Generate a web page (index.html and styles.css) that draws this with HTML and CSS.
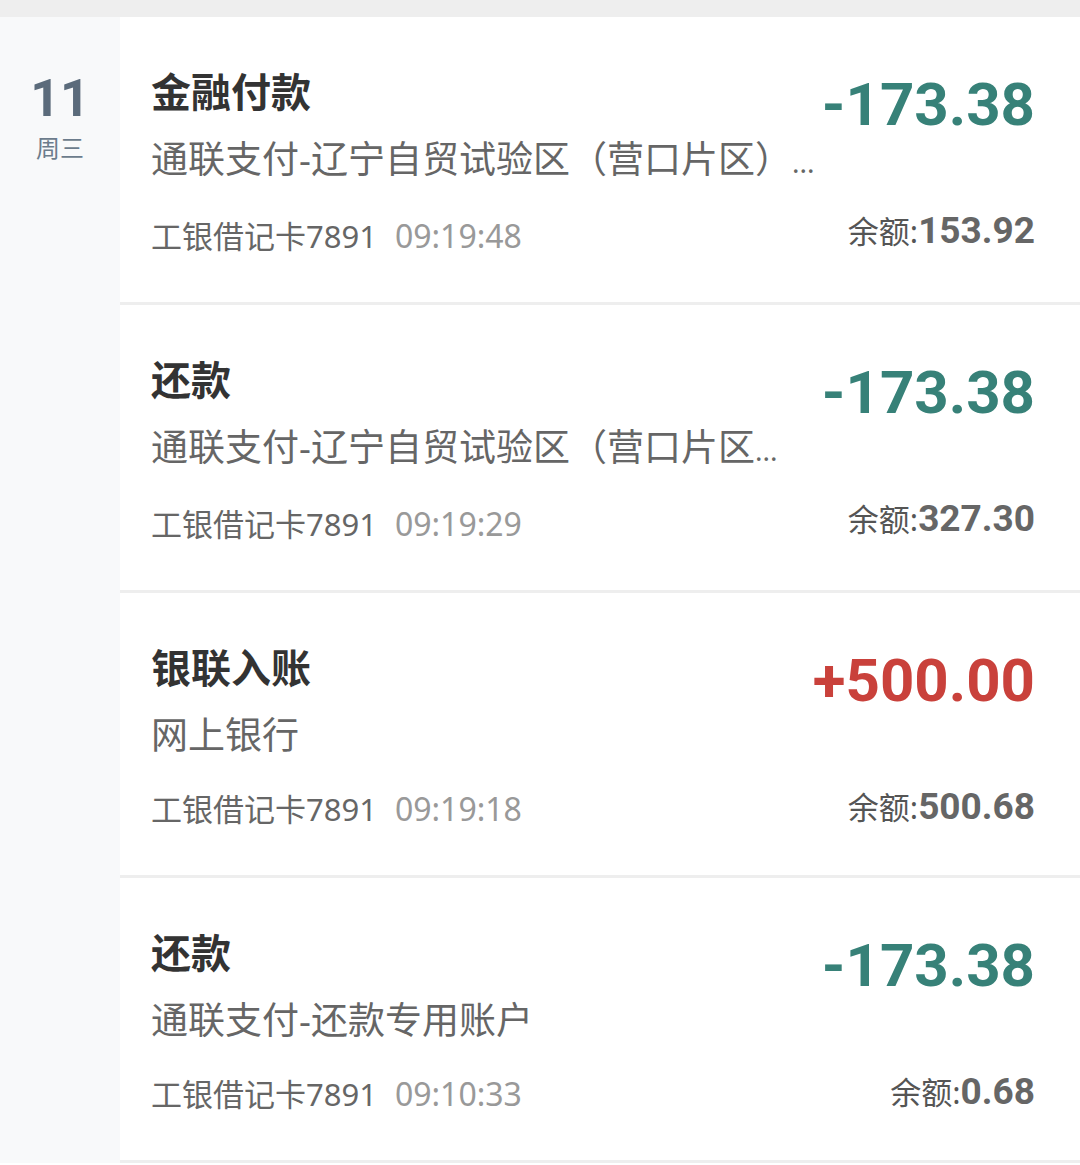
FILE: index.html
```html
<!doctype html>
<html lang="zh-CN">
  <head>
    <meta charset="UTF-8" />
    <meta name="viewport" content="width=device-width, initial-scale=1.0" />
    <title>账单明细</title>
    <link rel="stylesheet" href="styles.css">
  </head>
  <body>
    <div class="top-bar"></div>
    <main class="day">
      <div class="date-col">
        <div class="date-num">11</div>
        <div class="date-week">周三</div>
      </div>
      <div class="list">
        <div class="item">
          <div class="info">
            <div class="title">金融付款</div>
            <div class="desc">通联支付-辽宁自贸试验区（营口片区）<span class="dots">...</span></div>
            <div class="meta">工银借记卡7891<span class="time">09:19:48</span></div>
          </div>
          <div class="side">
            <div class="amount out">-173.38</div>
            <div class="balance">余额:<b>153.92</b></div>
          </div>
        </div>
        <div class="item">
          <div class="info">
            <div class="title">还款</div>
            <div class="desc">通联支付-辽宁自贸试验区（营口片区<span class="dots">...</span></div>
            <div class="meta">工银借记卡7891<span class="time">09:19:29</span></div>
          </div>
          <div class="side">
            <div class="amount out">-173.38</div>
            <div class="balance">余额:<b>327.30</b></div>
          </div>
        </div>
        <div class="item">
          <div class="info">
            <div class="title">银联入账</div>
            <div class="desc">网上银行</div>
            <div class="meta">工银借记卡7891<span class="time">09:19:18</span></div>
          </div>
          <div class="side">
            <div class="amount in">+500.00</div>
            <div class="balance">余额:<b>500.68</b></div>
          </div>
        </div>
        <div class="item">
          <div class="info">
            <div class="title">还款</div>
            <div class="desc">通联支付-还款专用账户</div>
            <div class="meta">工银借记卡7891<span class="time">09:10:33</span></div>
          </div>
          <div class="side">
            <div class="amount out">-173.38</div>
            <div class="balance">余额:<b>0.68</b></div>
          </div>
        </div>
      </div>
    </main>
  </body>
</html>
```

FILE: styles.css
```css
body {
  margin: 0;
  font-family: "Noto Sans", "Noto Sans CJK SC", sans-serif;
  background-color: #fff;
  overflow: hidden;
}

.top-bar {
  height: 17px;
  background-color: #eeeeee;
}

.day {
  display: flex;
}

.date-col {
  width: 120px;
  flex-shrink: 0;
  background-color: #f8f9fa;
  text-align: center;
  padding-top: 56px;
}

.date-num {
  font-family: "Roboto", sans-serif;
  font-weight: bold;
  font-size: 52px;
  line-height: 52px;
  color: #5b6b7b;
}

.date-week {
  font-size: 24px;
  line-height: 34px;
  margin-top: 6px;
  color: #6c7c8c;
}

.list {
  flex: 1;
  min-width: 0;
}

.item {
  display: flex;
  justify-content: space-between;
  padding: 50px 45px 42px 31px;
  border-bottom: 3px solid #eeeeee;
}

.info {
  flex: 1;
  min-width: 0;
}

.title {
  font-size: 40px;
  line-height: 50px;
  font-weight: bold;
  color: #333;
}

.desc {
  font-size: 37px;
  line-height: 48px;
  margin-top: 18px;
  color: #666;
  white-space: nowrap;
}

.dots {
  font-size: 28px;
}

.meta {
  font-size: 31px;
  line-height: 48px;
  margin-top: 26px;
  color: #666;
}

.time {
  font-size: 32px;
  color: #999;
  margin-left: 18px;
}

.side {
  text-align: right;
  padding-top: 3px;
}

.amount {
  font-family: "Roboto", sans-serif;
  font-weight: bold;
  font-size: 60px;
  line-height: 70px;
}

.amount.out {
  color: #378178;
}

.amount.in {
  color: #c9413b;
}

.balance {
  font-size: 31px;
  line-height: 48px;
  margin-top: 67px;
  color: #555;
  white-space: nowrap;
}

.balance b {
  font-family: "Roboto", sans-serif;
  font-size: 37px;
  color: #666;
}
```
